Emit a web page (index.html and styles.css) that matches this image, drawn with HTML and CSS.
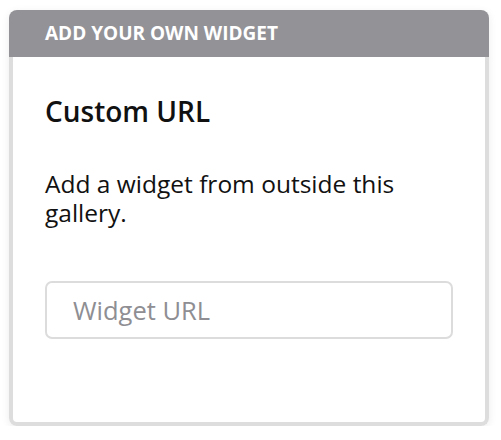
FILE: index.html
```html
<!DOCTYPE html>
<html>
<head>
<meta charset="utf-8">
<link rel="stylesheet" href="styles.css">
</head>
<body>
<div class="card">
  <div class="card-header">ADD YOUR OWN WIDGET</div>
  <div class="card-body">
    <h2 class="title">Custom URL</h2>
    <p class="desc">Add a widget from outside this gallery.</p>
    <input class="url-input" type="text" placeholder="Widget URL">
  </div>
</div>
</body>
</html>
```

FILE: styles.css
```css
html, body {
  margin: 0;
  padding: 0;
  background: #ffffff;
}
body {
  padding: 10px 0 0 9px;
  font-family: "Open Sans", "Noto Sans", sans-serif;
}
.card {
  width: 480px;
  height: 416px;
  display: flex;
  flex-direction: column;
  border-radius: 8px;
  box-shadow: 0 2px 8px rgba(0, 0, 0, 0.08);
}
.card-header {
  height: 47px;
  box-sizing: border-box;
  background: #929297;
  color: #ffffff;
  border-radius: 8px 8px 0 0;
  padding-left: 36px;
  font-size: 19px;
  font-weight: 700;
  line-height: 47px;
}
.card-body {
  flex: 1;
  border: 4px solid #dddddd;
  border-top: none;
  border-radius: 0 0 8px 8px;
  padding: 0 32px 0 32px;
  display: flex;
  flex-direction: column;
}
.title {
  margin: 37px 0 0 0;
  font-size: 28px;
  font-weight: 600;
  line-height: 34px;
  color: #111111;
}
.desc {
  margin: 41px 0 0 0;
  font-size: 24.5px;
  font-weight: 400;
  line-height: 29px;
  color: #111111;
}
.url-input {
  margin-top: 54px;
  height: 58px;
  flex: none;
  box-sizing: border-box;
  width: 100%;
  border: 2px solid #dcdcdc;
  border-radius: 7px;
  padding: 0 0 0 26px;
  font-family: "Open Sans", "Noto Sans", sans-serif;
  font-size: 25.5px;
  color: #111111;
  outline: none;
}
.url-input::placeholder {
  color: #8e8e93;
}
```
